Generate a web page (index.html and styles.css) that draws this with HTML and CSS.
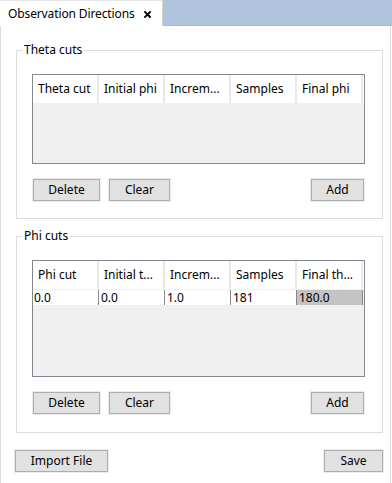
FILE: index.html
```html
<!DOCTYPE html>
<html>
<head>
<meta charset="utf-8">
<link rel="stylesheet" href="styles.css">
</head>
<body>
<div class="tabbar">
  <div class="tab">
    <span class="tab-title">Observation Directions</span>
    <svg class="tab-close" width="7" height="7" viewBox="0 0 7 7"><path d="M1 1L6 6M6 1L1 6" stroke="#000" stroke-width="1.9" stroke-linecap="square"/></svg>
  </div>
</div>
<div class="panel">
  <fieldset class="group group-theta">
    <legend>Theta cuts</legend>
    <div class="group-body">
      <div class="table table-theta">
        <div class="thead">
          <div class="th">Theta cut</div>
          <div class="th">Initial phi</div>
          <div class="th">Increm...</div>
          <div class="th">Samples</div>
          <div class="th">Final phi</div>
        </div>
      </div>
      <div class="btnrow">
        <button class="btn btn-delete">Delete</button>
        <button class="btn btn-clear">Clear</button>
        <span class="spacer"></span>
        <button class="btn btn-add">Add</button>
      </div>
    </div>
  </fieldset>
  <fieldset class="group group-phi">
    <legend>Phi cuts</legend>
    <div class="group-body">
      <div class="table table-phi">
        <div class="thead">
          <div class="th">Phi cut</div>
          <div class="th">Initial t...</div>
          <div class="th">Increm...</div>
          <div class="th">Samples</div>
          <div class="th">Final th...</div>
        </div>
        <div class="row">
          <div class="td">0.0</div>
          <div class="td">0.0</div>
          <div class="td">1.0</div>
          <div class="td">181</div>
          <div class="td td-selected">180.0</div>
        </div>
      </div>
      <div class="btnrow">
        <button class="btn btn-delete">Delete</button>
        <button class="btn btn-clear">Clear</button>
        <span class="spacer"></span>
        <button class="btn btn-add">Add</button>
      </div>
    </div>
  </fieldset>
  <div class="footer">
    <button class="btn btn-import">Import File</button>
    <span class="spacer"></span>
    <button class="btn btn-save">Save</button>
  </div>
</div>
</body>
</html>
```

FILE: styles.css
```css
* { box-sizing: border-box; }
html, body { margin: 0; padding: 0; }
body {
  width: 392px;
  height: 483px;
  overflow: hidden;
  background: #fff;
  color: #000;
  font-family: "Noto Sans", "Open Sans", sans-serif;
  font-size: 12px;
  line-height: 16px;
}
.tabbar {
  height: 26px;
  background: #b0c4de;
  border-bottom: 1px solid #a7b8cf;
  display: flex;
  align-items: flex-start;
}
.tab {
  width: 163px;
  height: 26px;
  background: #fff;
  border-top: 1px solid #e6e6e6;
  border-right: 1px solid #d4d4d4;
  display: flex;
  align-items: center;
  padding-left: 8px;
  padding-top: 1px;
}
.tab-title { white-space: nowrap; letter-spacing: -0.12px; }
.tab-close { margin-left: 9px; margin-top: 1px; }

.panel {
  width: 391px;
  height: 457px;
  border-left: 1px solid #dadada;
  border-right: 1px solid #dadada;
  padding: 16px 7px 0 15px;
}
.group {
  margin: 0;
  padding: 0 5px;
  border: 1px solid #dcdcdc;
  min-width: 0;
}
.group legend {
  padding: 0 2px;
  margin-left: 0;
  line-height: 16px;
  height: 16px;
}
.group-phi { margin-top: 9px; }
.group-body { padding: 16px 11px 16px 10px; }
.group-phi .group-body { padding-bottom: 17px; }

.table {
  width: 333px;
  border: 1px solid #828790;
  background: #f0f0f0;
}
.table-theta { height: 90px; }
.table-phi { height: 117px; }
.thead {
  display: flex;
  height: 28px;
  background: #fff;
}
.th {
  width: 66px;
  flex: none;
  padding-left: 5px;
  border-right: 2px solid #e8e8e8;
  line-height: 28px;
  white-space: nowrap;
  overflow: hidden;
}
.row {
  display: flex;
  height: 16px;
  border-top: 1px solid #f0f0f0;
}
.td {
  width: 66px;
  flex: none;
  height: 15px;
  line-height: 15px;
  background: #fff;
  border-left: 1px solid #8a8a8a;
  padding-left: 2px;
  white-space: nowrap;
}
.td:first-child {
  width: 65px;
  border-left: none;
  padding-left: 1px;
}
.td-selected {
  width: 67px;
  background: #c4c4c4;
  border-right: 1px solid #8a8a8a;
}

.btnrow {
  display: flex;
  margin-top: 14px;
  width: 333px;
}
.spacer { flex: 1; }
.btn {
  margin: 1px;
  height: 22px;
  padding: 0;
  border: 1px solid #adadad;
  outline: 1px solid #ececec;
  background: #e1e1e1;
  color: #000;
  font-family: inherit;
  font-size: 12px;
  line-height: 18px;
  text-align: center;
}
.btn-delete { width: 67px; }
.btn-clear { width: 61px; margin-left: 8px; }
.btn-add { width: 53px; }
.btn-import { width: 93px; }
.btn-save { width: 59px; }

.footer {
  display: flex;
  margin: 16px -1px 0 -2px;
}
```
